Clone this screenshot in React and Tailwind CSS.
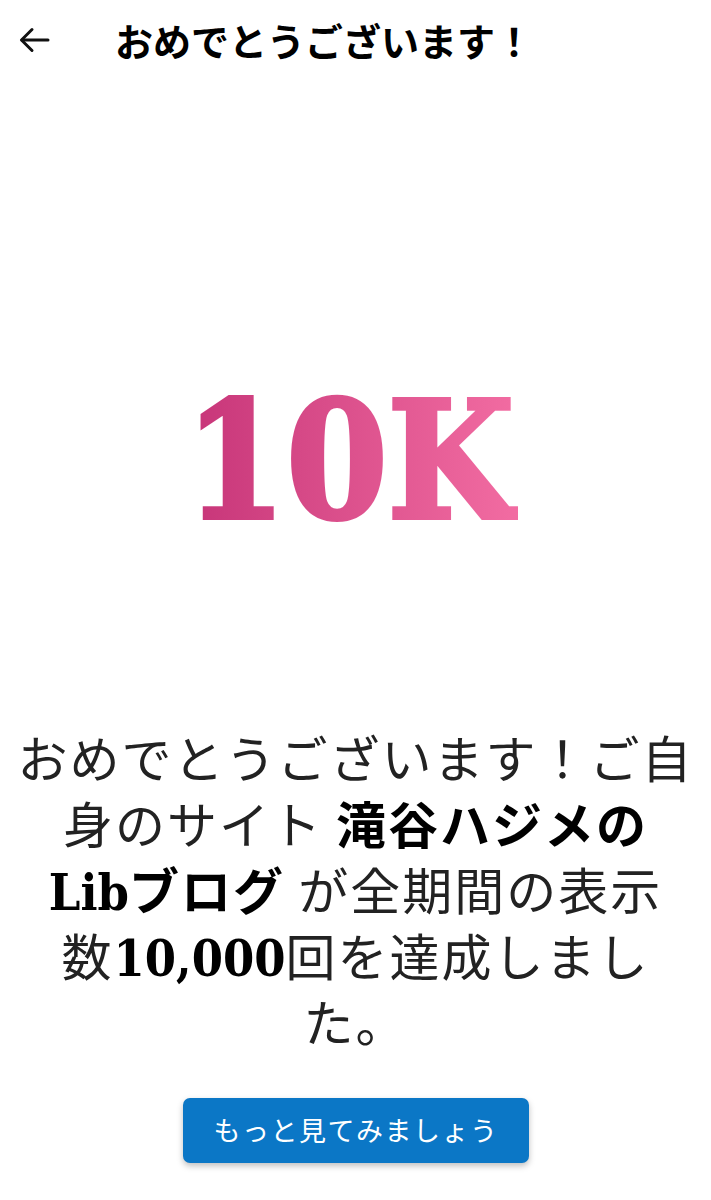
import React from "react";

const serifBold = {
  fontFamily: '"DejaVu Serif Condensed", "DejaVu Serif", "Noto Sans CJK JP", serif',
};

const Line = ({ children }) => (
  <div className="h-[66px] leading-[66px] whitespace-nowrap">{children}</div>
);

export default function App() {
  return (
    <div className="w-[711px] min-h-[1200px] bg-white flex flex-col" style={{ fontFamily: '"Noto Sans CJK JP", "Noto Sans", sans-serif' }}>
      {/* header */}
      <div className="h-[80px] flex items-center">
        <div className="w-[115px] flex items-center pl-[19px]">
          <svg width="31" height="26" viewBox="0 0 31 26" fill="none" stroke="#111" strokeWidth="3" strokeLinecap="round" strokeLinejoin="round">
            <path d="M29 13H3" />
            <path d="M13 2.5L2.5 13L13 23.5" />
          </svg>
        </div>
        <div className="text-[38px] font-bold text-black leading-none">おめでとうございます！</div>
      </div>

      {/* hero */}
      <div className="pt-[300px] flex justify-center pr-[12px]">
        <div
          className="h-[166px] text-[162px] leading-none font-bold bg-gradient-to-r from-[#c63378] to-[#f26ca2] bg-clip-text text-transparent [-webkit-text-stroke:4px_transparent] px-[4px]"
          style={serifBold}
        >
          10K
        </div>
      </div>

      {/* message */}
      <div className="mt-[177px] flex flex-col items-center text-center text-[50px] tracking-[2px] text-[#222222]">
        <Line>おめでとうございます！ご自</Line>
        <Line>
          身のサイト <span className="font-bold text-black">滝谷ハジメの</span>
        </Line>
        <Line>
          <span className="font-bold text-black tracking-normal" style={serifBold}>Lib</span>
          <span className="font-bold text-black">ブログ</span> が全期間の表示
        </Line>
        <Line>
          数<span className="font-bold text-black tracking-normal" style={serifBold}>10,000</span>回を達成しまし
        </Line>
        <Line>た。</Line>
      </div>

      {/* button */}
      <div className="mt-[45px] flex justify-center pl-[1px]">
        <button className="w-[346px] h-[65px] rounded-[7px] bg-[#0b77c6] text-white text-[27px] tracking-[1.5px] shadow-[0_3px_6px_rgba(0,0,0,0.25)] flex items-center justify-center">
          もっと見てみましょう
        </button>
      </div>
    </div>
  );
}
